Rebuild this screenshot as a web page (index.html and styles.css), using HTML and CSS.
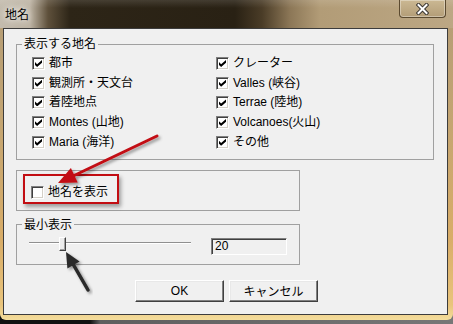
FILE: index.html
```html
<!DOCTYPE html>
<html lang="ja">

<head>
    <meta charset="UTF-8">
    <title>地名</title>
    <link rel="stylesheet" href="styles.css">
</head>

<body>
    <div class="window">
        <div class="titlebar">
            <span class="title">地名</span>
            <button class="close-btn">
                <svg width="13" height="12" viewBox="0 0 13 12">
                    <path d="M2.5 2 L10.5 10 M10.5 2 L2.5 10" stroke="#3a3631" stroke-width="4" stroke-linecap="square" />
                    <path d="M2.5 2 L10.5 10 M10.5 2 L2.5 10" stroke="#fff" stroke-width="2" stroke-linecap="square" />
                </svg>
            </button>
        </div>

        <div class="client">
            <fieldset class="group names">
                <legend>表示する地名</legend>
                <div class="list">
                    <label class="check"><span class="box on"></span>都市</label>
                    <label class="check"><span class="box on"></span>観測所・天文台</label>
                    <label class="check"><span class="box on"></span>着陸地点</label>
                    <label class="check"><span class="box on"></span>Montes (山地)</label>
                    <label class="check"><span class="box on"></span>Maria (海洋)</label>
                    <label class="check"><span class="box on"></span>クレーター</label>
                    <label class="check"><span class="box on"></span>Valles (峡谷)</label>
                    <label class="check"><span class="box on"></span>Terrae (陸地)</label>
                    <label class="check"><span class="box on"></span>Volcanoes(火山)</label>
                    <label class="check"><span class="box on"></span>その他</label>
                </div>
            </fieldset>

            <fieldset class="group show">
                <label class="check"><span class="box"></span>地名を表示</label>
            </fieldset>

            <fieldset class="group min">
                <legend>最小表示</legend>
                <div class="slider-row">
                    <div class="slider">
                        <div class="track"></div>
                        <div class="thumb"></div>
                    </div>
                    <div class="edit">20</div>
                </div>
            </fieldset>

            <div class="buttons">
                <button class="btn">OK</button>
                <button class="btn">キャンセル</button>
            </div>
        </div>

        <!-- annotations drawn over the dialog -->
        <div class="highlight"></div>
        <svg class="marks" width="453" height="324" viewBox="0 0 453 324">
            <defs>
                <filter id="shadow" x="-20%" y="-20%" width="140%" height="140%">
                    <feDropShadow dx="2" dy="2" stdDeviation="1.5" flood-color="#000" flood-opacity="0.4" />
                </filter>
            </defs>
            <g filter="url(#shadow)">
                <line x1="157" y1="136" x2="72" y2="176.5" stroke="#c20d12" stroke-width="3" stroke-linecap="round" />
                <polygon points="58,183 77.7,182.5 70.9,168.1" fill="#c20d12" />
            </g>
            <g filter="url(#shadow)">
                <line x1="88" y1="290" x2="73" y2="264" stroke="#2a2a2a" stroke-width="3.5" stroke-linecap="round" />
                <polygon points="66,252 79.6,261.5 67.4,268.5" fill="#2a2a2a" />
            </g>
        </svg>
    </div>
</body>

</html>
```

FILE: styles.css
```css
* {
    box-sizing: border-box;
}

body {
    margin: 0;
    width: 453px;
    height: 324px;
    overflow: hidden;
    background: linear-gradient(90deg, #111 0, #111 90px, #5e5e5e 100px, #777 100%);
    font-family: 'Liberation Sans', 'Noto Sans CJK JP', sans-serif;
    font-size: 12px;
    color: #000;
}

.window {
    position: relative;
    width: 453px;
    height: 320px;
    display: flex;
    flex-direction: column;
    border-radius: 0 0 6px 6px;
    background: linear-gradient(180deg, #b39c76 0, #c4a572 120px, #d9ad68 240px, #e9c47c 305px, #f4dd9c 320px);
}

/* title bar */

.titlebar {
    height: 28px;
    display: flex;
    justify-content: space-between;
    align-items: flex-start;
    background:
        linear-gradient(180deg, rgba(255, 255, 255, 0.12) 0, rgba(255, 255, 255, 0) 8px),
        linear-gradient(90deg, #c3bbad 0, #bdb3a3 30px, #5e503b 48px, #2d2517 70px, #292114 235px, #4a3c27 262px, #8c7757 290px, #b29c77 320px, #bca784 453px);
}

.title {
    padding: 7px 0 0 5px;
    line-height: 14px;
    font-family: 'Noto Sans CJK JP', sans-serif;
    text-shadow: 0 0 6px #fff, 0 0 10px rgba(255, 255, 255, 0.8);
}

.close-btn {
    width: 47px;
    height: 18px;
    margin-right: 7px;
    padding: 0;
    display: flex;
    align-items: center;
    justify-content: center;
    border: 1px solid #5b4a30;
    border-top: none;
    border-radius: 0 0 4px 4px;
    background: linear-gradient(180deg, #cbb893, #b39d77);
    box-shadow: inset 0 0 0 1px rgba(255, 255, 255, 0.35);
}

/* client area */

.client {
    flex: 1;
    margin: 0 5px 5px 3px;
    padding-top: 8px;
    border: 1px solid #3c3c3c;
    background: #f0f0f0;
}

.group {
    margin: 0 0 0 12px;
    min-width: 0;
    border: 1px solid #a0a0a0;
}

.group legend {
    padding: 0 2px;
    line-height: 14px;
}

.names {
    width: 418px;
    padding: 6px 0 10px 5px;
}

.list {
    display: grid;
    grid-auto-flow: column;
    grid-template-columns: 184px 1fr;
    grid-template-rows: repeat(5, 13px);
    row-gap: 6.7px;
    padding-left: 10px;
}

.check {
    display: flex;
    align-items: center;
    gap: 4px;
    height: 13px;
    line-height: 13px;
    white-space: nowrap;
}

.box {
    position: relative;
    flex: none;
    width: 13px;
    height: 13px;
    background: #fff;
    border: 1px solid;
    border-color: #808080 #fff #fff #808080;
    box-shadow: inset 1px 1px #404040, inset -1px -1px #d4d0c8;
}

.box.on::after {
    content: '';
    position: absolute;
    left: 2px;
    top: 2px;
    width: 7px;
    height: 7px;
    background: #000;
    clip-path: polygon(0 30%, 30% 60%, 100% 0, 100% 40%, 30% 100%, 0 70%);
}

.show {
    width: 284px;
    margin-top: 10px;
    padding: 15px 0 11px 14px;
}

.min {
    width: 284px;
    margin-top: 7px;
    padding: 5px 0 8px 5px;
}

.slider-row {
    display: flex;
    gap: 20px;
    margin-left: 7px;
    height: 19px;
}

.slider {
    position: relative;
    width: 162px;
}

.track {
    margin-top: 5px;
    height: 2px;
    border-top: 1px solid #909090;
    border-bottom: 1px solid #fff;
}

.thumb {
    position: absolute;
    left: 30px;
    top: 0;
    width: 7px;
    height: 14px;
    background: #ececec;
    border: 1px solid;
    border-color: #fff #404040 #404040 #fff;
    box-shadow: inset -1px -1px #a0a0a0;
}

.edit {
    width: 76px;
    height: 17px;
    margin-top: 1px;
    padding: 1px 0 0 3px;
    line-height: 13px;
    background: #f0f0f0;
    border: 1px solid;
    border-color: #808080 #fff #fff #808080;
    box-shadow: inset 1px 1px #404040;
}

.buttons {
    display: flex;
    justify-content: center;
    gap: 5px;
    margin: 15px 0 0 2px;
}

.btn {
    width: 89px;
    height: 22px;
    padding: 0;
    font: inherit;
    color: #000;
    background: #f0f0f0;
    border: 1px solid;
    border-color: #fff #404040 #404040 #fff;
    box-shadow: inset -1px -1px #808080, inset 1px 1px #e8e8e8;
}

/* annotations */

.highlight {
    position: absolute;
    left: 23px;
    top: 174px;
    width: 96px;
    height: 30px;
    border: 2px solid #c20d12;
    box-shadow: 2px 3px 4px rgba(0, 0, 0, 0.35);
}

.marks {
    position: absolute;
    left: 0;
    top: 0;
    pointer-events: none;
}
```
